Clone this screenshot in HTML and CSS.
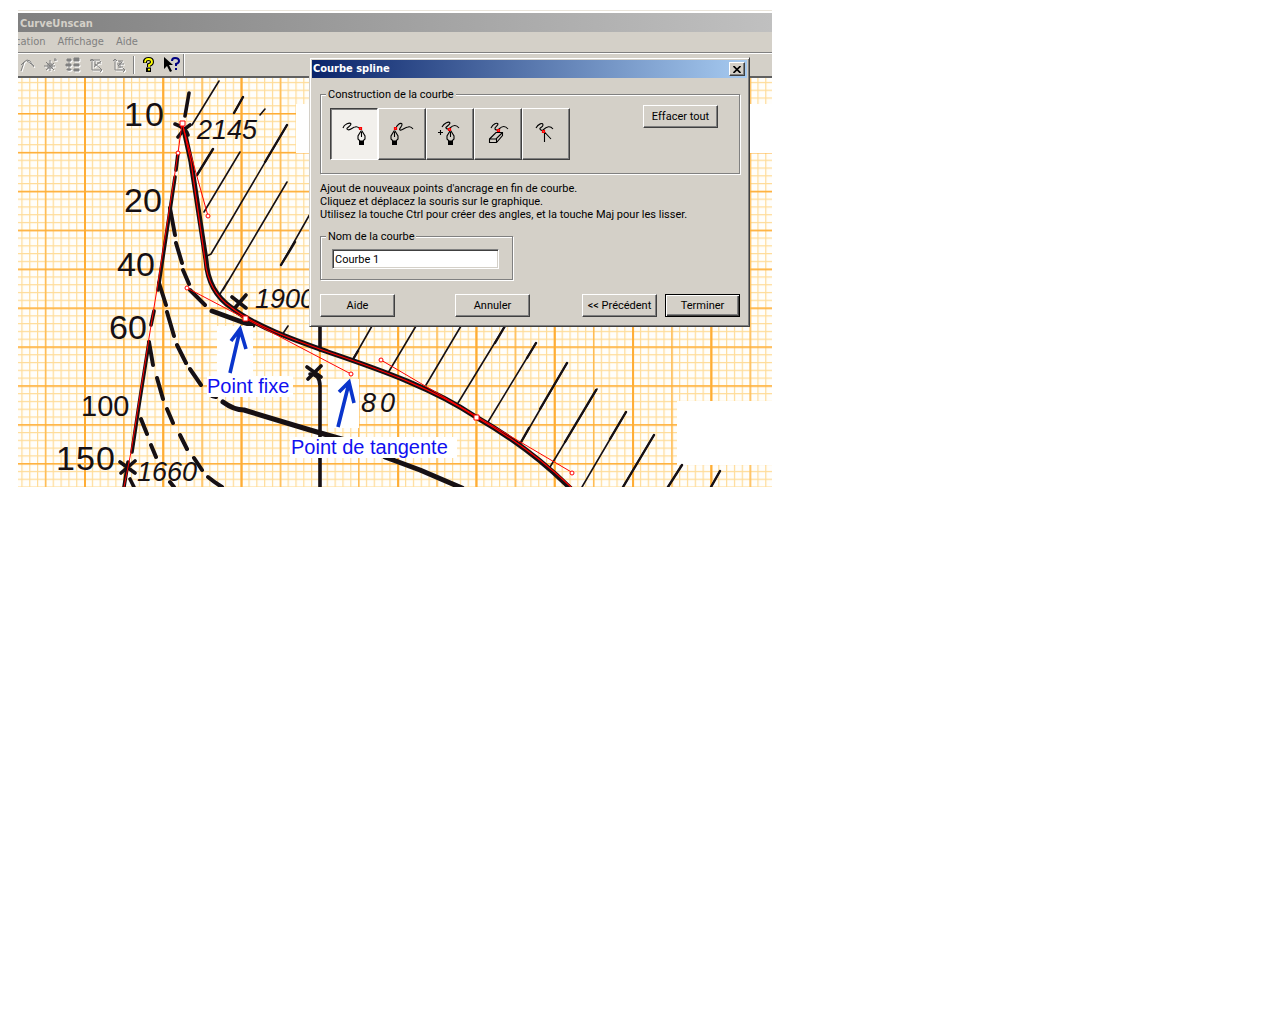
FILE: index.html
```html
<!DOCTYPE html>
<html lang="fr">
<head>
<meta charset="utf-8">
<title>CurveUnscan</title>
<link rel="stylesheet" href="styles.css">
</head>
<body>
<main class="app">
  <header class="app-title">CurveUnscan</header>
  <nav class="menu">
    <button type="button">cation</button>
    <button type="button">Affichage</button>
    <button type="button">Aide</button>
  </nav>
  <div class="toolbar" role="toolbar" aria-label="Outils">
    <button type="button" class="tool first" aria-label="Courbe" disabled><svg class="off" width="16" height="16" viewBox="0 0 16 16"><path d="M1 14L4 5L7 3L10 4L12 7L14 10M4 5L1 8M7 4L14 9"/></svg></button>
    <button type="button" class="tool" aria-label="Points" disabled><svg class="off" width="16" height="16" viewBox="0 0 16 16"><path d="M8 3V14M2 9H13M4 5L12 13M12 6L4 13M12 3H15M13 1V4M6 7H10V11H6Z"/></svg></button>
    <button type="button" class="tool" aria-label="Tableau" disabled><svg class="off solid" width="16" height="16" viewBox="0 0 16 16"><path d="M2 2H6V4H2ZM9 1H14V4H9ZM1 7H6V9H1ZM9 7H14V9H9ZM2 12H6V13H2ZM9 12H14V14H9ZM4 4V14"/></svg></button>
    <button type="button" class="tool" aria-label="Axes" disabled><svg class="off" width="16" height="16" viewBox="0 0 16 16"><path d="M4 2V13H14M2 4L4 2L6 4M12 11L14 13L12 15M2 3H12M6 10L13 4M7 4V9M9 6H13M7 7L12 11"/></svg></button>
    <button type="button" class="tool" aria-label="Origine" disabled><svg class="off" width="16" height="16" viewBox="0 0 16 16"><path d="M4 2V13H14M2 4L4 2L6 4M12 11L14 13L12 15M7 4H12M6 7H13M7 10H12M9 4V11M7 9L11 5"/></svg></button>
    <span class="sep"></span>
    <button type="button" class="tool" aria-label="Aide"><svg width="16" height="16" viewBox="0 0 16 16"><path d="M4 6V4Q5 2 7.500 2Q11 2 11 5Q11 7 8 8V10" fill="none" stroke="#000" stroke-width="4"/><path d="M5 10.500H10V15H5Z"/><path d="M4 5.500Q4 2 7.500 2Q11 2 11 5Q11 7 8 8V10M7 12.700H9" fill="none" stroke="#ff0" stroke-width="1.800"/></svg></button>
    <button type="button" class="tool" aria-label="Aide contextuelle"><svg width="16" height="16" viewBox="0 0 16 16"><path d="M0 0V12L3 9L6 15L8 14L5 8H9Z"/><path d="M8 4Q8 1 11 1Q15 1 15 4Q15 6 12 7V9M12 11V13" fill="none" stroke="#000080" stroke-width="2"/></svg></button>
    <span class="sep end"></span>
  </div>
  <svg class="graph" viewBox="18 78 754 409" role="img" aria-label="Graphique scanné">
    <defs>
      <pattern id="fineX" x="84" y="78" width="7.83" height="40" patternUnits="userSpaceOnUse"><path class="fine" d="M.6 0V40"/></pattern>
      <pattern id="fineY" x="18" y="113" width="40" height="7.78" patternUnits="userSpaceOnUse"><path class="fine" d="M0 .6H40"/></pattern>
      <pattern id="midX" x="84" y="78" width="39.15" height="40" patternUnits="userSpaceOnUse"><path d="M.8 0V40" stroke="#ffb84a" stroke-width="1.4"/></pattern>
      <pattern id="bigX" x="84" y="78" width="78.3" height="40" patternUnits="userSpaceOnUse"><path d="M1 0V40" stroke="#ffad35" stroke-width="2"/></pattern>
      <pattern id="midY" x="18" y="113" width="40" height="38.9" patternUnits="userSpaceOnUse"><path d="M0 .8H40" stroke="#ffad35" stroke-width="1.5"/></pattern>
    </defs>
    <rect x="18" y="78" width="754" height="409" fill="#fffefb"/>
    <g>
      <rect x="18" y="78" width="754" height="409" fill="url(#fineX)"/>
      <rect x="18" y="78" width="754" height="409" fill="url(#fineY)"/>
      <rect x="18" y="78" width="754" height="409" fill="url(#midX)"/>
      <rect x="18" y="78" width="754" height="409" fill="url(#bigX)"/>
      <rect x="18" y="78" width="754" height="409" fill="url(#midY)"/>
    </g>
    <path fill="#fff" d="M296 104H310V153H296ZM750 104H772V153H750ZM677 401H772V465H677Z"/>
    <g class="ink thin">
      <path d="M192 125L219 81M234 113L243 97M260 115L265 109M197 175L213 149M204 212L240 152M207 256L211 254L287 125M223 290L287 182M281 265L310 214M220 294L228 281M282 335L288 326M352 361L372 326M388 373L416 326M426 385L461 326M458 403L505 326M488 422L536 343M520 444L567 363M550 467L597 389M582 487L626 412M623 487L654 435M668 487L682 465M711 487L720 471"/>
    </g>
    <g class="ink medium">
      <path d="M265 162L287 125M281 265L295 242M197 175L213 149M234 113L243 97M352 361L358 351M495 343L505 326M527 358L536 343M520 444L529 428M540 409L567 363M565 442L596 390M610 439L626 412M623 487L654 435M668 487L682 465M711 487L720 471"/>
    </g>
    <g class="ink mid">
      <path d="M185 116L189 93M320 326V350M310 374Q320 374 320 386V437M320 458V487M178 153L176 170M175 177L166 237L158 290M154 311L151 325M149 342L139 405L132 452M128 462L124 487M130 479L134 487"/>
      <path d="M175 124Q186 128 188 135M190 125Q184 129 178 137M232 297L246 308M246 295L234 309M307 367L321 377M321 366L308 379M120 462L135 473M135 461L121 473"/>
    </g>
    <g class="ink dash">
      <path d="M170 208L175 235M176 243L182 263M183 270L189 284M190 290L205 305M159 283L166 305M167 312L174 336M177 345L186 363M190 369L201 385M212 396L216 397M149 342L153 365M157 378L163 399M167 409L173 423M180 435L187 449M194 458L202 470M208 477Q214 482 222 487M141 419L147 434M151 445L156 457M170 482L174 487"/>
    </g>
    <g class="ink bold">
      <path d="M184 130L191 162L206 260Q208 292 232 308C256 327 300 342 328 352C384 371 434 389 476 417Q530 448 571 489"/>
      <path d="M212 311L242 322L253 325M223 402Q234 410 244 410L310 430L345 440M385 457L420 470L462 488"/>
    </g>
    <g class="hand">
      <text x="124" y="126">1</text><text x="145" y="126">0</text>
      <text x="124" y="212">2</text><text x="143" y="212">0</text>
      <text x="117" y="276">4</text><text x="136" y="276">0</text>
      <text x="109" y="339">6</text><text x="128" y="339">0</text>
      <text x="56" y="470">1</text><text x="76" y="470">5</text><text x="96" y="470">0</text>
      <text x="81" y="416" class="small">100</text>
    </g>
    <g class="hand slant">
      <text x="197" y="139">2145</text>
      <text x="255" y="308">1900</text>
      <text x="137" y="481">1660</text>
      <text x="361" y="412">8</text><text x="380" y="412">0</text>
    </g>
    <g class="spline">
      <path d="M182 123L178 153L158 283L149 338L131 452L124 487M182 123L208 216M187 288L351 374M381 360L573 473"/>
      <path class="fit" d="M183 126L191 162L205 260Q208 292 232 308C256 327 300 342 328 352C384 371 434 389 476 417Q530 448 571 487"/>
      <path class="node" d="M180 121H185V126H180ZM243 316H248V321H243ZM474 415H479V420H474Z"/>
      <circle cx="178" cy="153" r="2"/><circle cx="208" cy="216" r="2"/><circle cx="187" cy="288" r="2"/><circle cx="351" cy="374" r="2"/><circle cx="381" cy="360" r="2"/><circle cx="572" cy="473" r="2"/>
    </g>
    <path fill="#fff" d="M217 326H253V376H293V397H207V376H217ZM328 379H359V428H328ZM290 437H457V458H290Z"/>
    <path class="arrow" d="M230 373L240 330M231 341L240 329L246 349M338 427L349 383M339 392L349 382L354 403"/>
    <g class="note">
      <text x="207" y="393">Point fixe</text>
      <text x="291" y="454">Point de tangente</text>
    </g>
  </svg>

  <section class="dialog" role="dialog" aria-labelledby="dlg-title">
    <header class="dialog-title"><span id="dlg-title">Courbe spline</span>
      <button type="button" class="close" aria-label="Fermer"><svg width="8" height="7" viewBox="0 0 8 7"><path d="M.5 0L7.500 7M7.500 0L.5 7" stroke="#000" stroke-width="1.600"/></svg></button>
    </header>
    <form class="dialog-body">
      <fieldset class="build">
        <legend>Construction de la courbe</legend>
        <div class="build-row">
          <div class="modes">
            <button type="button" class="mode" aria-pressed="true" aria-label="Ajouter en fin"><svg width="28" height="26" viewBox="0 0 28 26"><path class="ln" d="M3 7C4 3 10 1 11 3C11 5 6 7 7 8C9 11 13 6 15 6Q18 5 20 8M21 10L18 15V18L20 20H23L25 18V15L22 10ZM21.500 11V16"/><path d="M19 20H24V24H19Z"/><path class="pt" d="M19.500 6.500H21.500V8.500H19.500Z"/></svg></button>
            <button type="button" class="mode" aria-label="Ajouter au début"><svg width="28" height="26" viewBox="0 0 28 26"><path class="ln" d="M8 8C8 4 13 1 14 3C15 5 10 8 12 9C14 10 17 6 20 6Q23 5 25 8M6 10L3 15V18L5 20H8L10 18V15L7 10ZM6.500 11V16"/><path d="M4 20H9V24H4Z"/><path class="pt" d="M6.500 6.500H8.500V8.500H6.500Z"/></svg></button>
            <button type="button" class="mode" aria-label="Insérer un point"><svg width="28" height="26" viewBox="0 0 28 26"><path class="ln" d="M6 6C8 2 13 0 14 2C14 4 9 6 10 7Q12 9 14 7Q19 2 23 7M14 10L11 15V18L13 20H16L18 18V15L15 10ZM14.500 11V16M2 11.500H7M4.500 9V14"/><path d="M12 20H17V24H12Z"/><path class="pt" d="M12.500 7.500H14.500V9.500H12.500Z"/></svg></button>
            <button type="button" class="mode" aria-label="Effacer un point"><svg width="28" height="26" viewBox="0 0 28 26"><path class="ln" d="M7 7C9 3 13 1 14 3C14 5 10 6 11 8Q13 10 15 8Q20 3 24 8M5.500 18L12 11.500H18.500V14.500L12.500 21.500H5.500ZM5.500 18H12L18.500 11.500M12.500 18V21"/><path class="pt" d="M13.500 8.500H15.500V10.500H13.500Z"/></svg></button>
            <button type="button" class="mode" aria-label="Modifier un point"><svg width="28" height="26" viewBox="0 0 28 26"><path class="ln" d="M4 7C6 3 11 1 11 4C11 6 7 7 8 8Q9 10 11 9Q17 3 21 8M12.500 11V21M12.500 11L19 18"/><path class="pt" d="M10.500 9.500H12.500V11.500H10.500Z"/></svg></button>
          </div>
          <button type="button" class="btn">Effacer tout</button>
        </div>
      </fieldset>
      <p class="hint">Ajout de nouveaux points d'ancrage en fin de courbe.<br>Cliquez et déplacez la souris sur le graphique.<br>Utilisez la touche Ctrl pour créer des angles, et la touche Maj pour les lisser.</p>
      <fieldset class="name">
        <legend><label for="curve-name">Nom de la courbe</label></legend>
        <input id="curve-name" type="text" value="Courbe 1">
      </fieldset>
      <div class="actions">
        <button type="button" class="btn">Aide</button>
        <button type="button" class="btn cancel">Annuler</button>
        <button type="button" class="btn">&lt;&lt; Précédent</button>
        <button type="button" class="btn default">Terminer</button>
      </div>
    </form>
  </section>
</main>
</body>
</html>
```
FILE: styles.css
```css
* { box-sizing: border-box; }
body {
  margin: 10px 18px;
  background: #fff;
  color: #000;
  font: 11px/13px Roboto, "Liberation Sans", Arial, sans-serif;
}
button, input { font: inherit; color: inherit; margin: 0; padding: 0; }

.app {
  position: relative;
  max-width: 754px;
  background: #d4d0c8;
  border-top: 1px solid #e9e4da;
}
.app-title {
  padding-left: 2px;
  border-top: 2px solid #fff;
  height: 21px;
  background: linear-gradient(90deg, #808080, #c0c0c0);
  color: #d4d0c8;
  font: bold 11px/21px "DejaVu Sans Condensed", "DejaVu Sans", sans-serif;
}
.menu {
  display: flex;
  gap: 12px;
  height: 20px;
  overflow: hidden;
}
.menu button {
  border: 0;
  background: none;
  color: #808080;
  font: 11px/20px "DejaVu Sans Condensed", "DejaVu Sans", sans-serif;
}
.menu button:first-child { margin-left: -3px; }
.toolbar {
  display: flex;
  align-items: center;
  height: 26px;
  border-top: 1px solid #808080;
  border-bottom: 2px solid #606060;
  box-shadow: inset 0 1px #fff;
}
.tool {
  width: 23px;
  height: 22px;
  display: grid;
  place-items: center;
  border: 0;
  background: none;
}
.tool.first { width: 20px; }
.off {
  fill: none;
  stroke: #808080;
  filter: drop-shadow(1px 1px 0 #fff);
}
.off.solid { fill: #808080; }
.sep {
  width: 2px;
  height: 18px;
  margin: 0 2px 0 3px;
  border-left: 1px solid #808080;
  border-right: 1px solid #fff;
}
.sep.end { height: 22px; margin: 0; }

.graph { display: block; width: 100%; height: auto; }
.fine { stroke: #ffdc98; stroke-width: 1.2; }
.ink { fill: none; stroke: #161014; stroke-linecap: round; stroke-linejoin: round; }
.thin { stroke-width: 1.6; }
.medium { stroke-width: 2.4; }
.mid { stroke-width: 3.6; }
.dash { stroke-width: 4; }
.bold { stroke-width: 5; }
.hand {
  fill: #161014;
  font: 34px "Liberation Sans", Arial, sans-serif;
}
.small { font-size: 29px; }
.slant { font-size: 27px; font-style: italic; }
.spline { fill: none; stroke: #f00; stroke-width: 1; }
.fit { stroke-width: 1.2; }
.spline circle, .node { fill: #fff; }
.arrow { fill: none; stroke: #0a35cc; stroke-width: 3.6; }
.note { fill: #1010f0; font: 20px "Liberation Sans", Arial, sans-serif; }

.dialog {
  position: absolute;
  left: 291px;
  top: 46px;
  width: 441px;
  padding: 1px;
  background: #d4d0c8;
  border: 1px solid;
  border-color: #d4d0c8 #404040 #404040 #d4d0c8;
  box-shadow: inset 1px 1px #fff, inset -1px -1px #808080;
}
.dialog-title {
  display: flex;
  align-items: center;
  justify-content: space-between;
  height: 18px;
  margin: 1px;
  padding: 0 2px 0 1px;
  background: linear-gradient(90deg, #0a246a, #a6caf0);
  color: #fff;
  font: bold 11px/18px "DejaVu Sans Condensed", "DejaVu Sans", sans-serif;
}
.btn, .mode, .close {
  background: #d4d0c8;
  border: 1px solid;
  border-color: #fff #404040 #404040 #fff;
  box-shadow: inset -1px -1px #808080;
}
.close {
  width: 16px;
  height: 14px;
  display: grid;
  place-items: center;
}
.dialog-body { padding: 9px 8px 8px 9px; }
fieldset {
  min-width: 0;
  margin: 0;
  padding: 0 8px;
  border: 2px groove #fff;
  border-image: linear-gradient(#808080, #808080) 1;
  border-width: 1px;
  box-shadow: 1px 1px #fff, inset 1px 1px #fff;
}
legend {
  margin-left: -3px;
  padding: 0 2px;
  background: #d4d0c8;
}
.build { height: 86px; }
.build-row {
  display: flex;
  justify-content: space-between;
  align-items: flex-start;
  padding: 4px 13px 0 1px;
}
.modes { display: flex; margin-top: 3px; }
.mode {
  width: 48px;
  height: 52px;
  display: grid;
  place-items: center;
}
.mode[aria-pressed="true"] {
  background: #f2f0ec;
  border-color: #404040 #fff #fff #404040;
  box-shadow: inset 1px 1px #808080;
}
.ln { fill: none; stroke: #000; stroke-width: 1.1; }
.pt { fill: #c66; stroke: #f00; stroke-width: 1.2; }
.btn { width: 75px; height: 23px; white-space: nowrap; }
.hint { margin: 8px 0 9px; }
.name { width: 193px; height: 50px; }
.name input {
  display: block;
  width: 167px;
  height: 20px;
  margin: 6px 0 0 3px;
  padding: 0 2px;
  background: #fff;
  border: 1px solid;
  border-color: #808080 #fff #fff #808080;
  box-shadow: inset 1px 1px #404040, inset -1px -1px #d4d0c8;
}
.actions { display: flex; gap: 8px; margin-top: 14px; }
.cancel { margin: 0 auto 0 52px; }
.default { border-color: #000; box-shadow: inset 1px 1px #fff, inset -1px -1px #404040, inset -2px -2px #808080; }
```
